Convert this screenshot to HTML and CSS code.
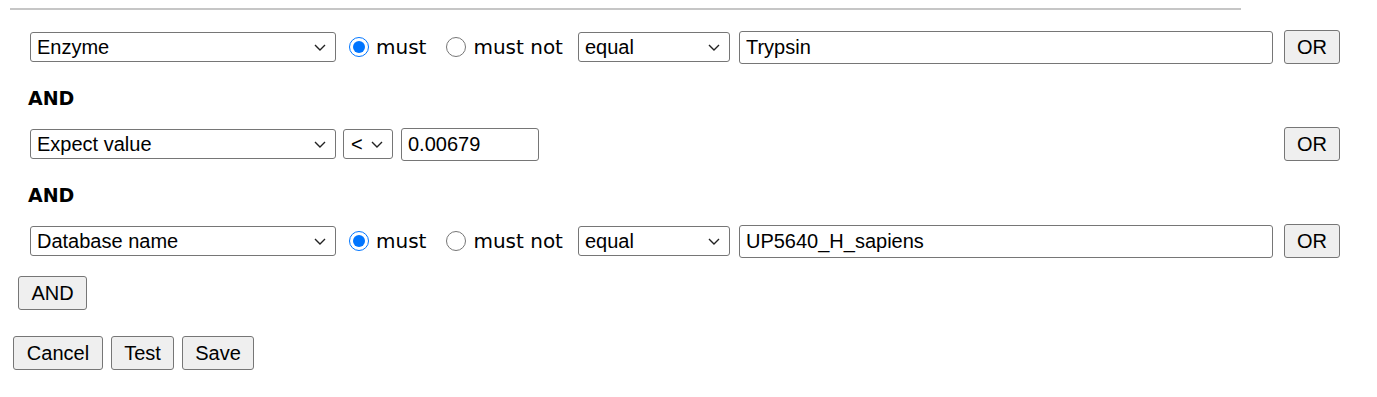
FILE: index.html
```html
<!DOCTYPE html>
<html lang="en">
<head>
    <meta charset="UTF-8">
    <meta name="viewport" content="width=device-width, initial-scale=1.0">
    <title>Filter Rules</title>
    <link rel="stylesheet" href="styles.css">
</head>
<body>
    <hr class="top-rule">

    <form id="filterForm">
        <div class="rules">
            <div class="cond">
                <select class="field">
                    <option>Enzyme</option>
                </select>
                <label class="choice"><input type="radio" name="r1" checked>must</label>
                <label class="choice"><input type="radio" name="r1">must not</label>
                <select class="op">
                    <option>equal</option>
                </select>
                <input type="text" class="value" value="Trypsin">
                <button type="button" class="btn or-btn">OR</button>
            </div>

            <div class="and-label">AND</div>

            <div class="cond">
                <select class="field">
                    <option>Expect value</option>
                </select>
                <select class="cmp">
                    <option>&lt;</option>
                </select>
                <input type="text" class="num" value="0.00679">
                <button type="button" class="btn or-btn">OR</button>
            </div>

            <div class="and-label">AND</div>

            <div class="cond">
                <select class="field">
                    <option>Database name</option>
                </select>
                <label class="choice"><input type="radio" name="r3" checked>must</label>
                <label class="choice"><input type="radio" name="r3">must not</label>
                <select class="op">
                    <option>equal</option>
                </select>
                <input type="text" class="value" value="UP5640_H_sapiens">
                <button type="button" class="btn or-btn">OR</button>
            </div>
        </div>

        <div class="add-row">
            <button type="button" class="btn">AND</button>
        </div>

        <div class="actions">
            <button type="button" class="btn">Cancel</button>
            <button type="button" class="btn">Test</button>
            <button type="button" class="btn">Save</button>
        </div>
    </form>
</body>
</html>
```

FILE: styles.css
```css
body {
    margin: 0;
    padding: 0;
    background-color: #ffffff;
    color: #000;
    font-family: "DejaVu Sans", Verdana, sans-serif;
    font-size: 20px;
}
.top-rule {
    margin: 8px 0 0 10px;
    width: 1231px;
    height: 0;
    border: none;
    border-top: 2px solid #c6c6c6;
}
select, input[type="text"], .btn {
    font-family: "Liberation Sans", Arial, sans-serif;
    font-size: 20px;
    color: #000;
    box-sizing: border-box;
}
.rules {
    margin-top: 20px;
}
.cond {
    display: flex;
    align-items: center;
    height: 34px;
    padding-left: 30px;
}
.and-label {
    height: 63px;
    line-height: 68px;
    padding-left: 28px;
    font-weight: bold;
    font-size: 19px;
}
select {
    -webkit-appearance: none;
    appearance: none;
    height: 30px;
    padding: 0 24px 0 6px;
    border: 1px solid #767676;
    border-radius: 3px;
    background-color: #fff;
    background-image: url("data:image/svg+xml,%3Csvg xmlns='http://www.w3.org/2000/svg' width='12' height='7' viewBox='0 0 12 7'%3E%3Cpath d='M1 1l5 5 5-5' fill='none' stroke='%23222' stroke-width='1.4'/%3E%3C/svg%3E");
    background-repeat: no-repeat;
    background-position: right 9px center;
}
.field {
    width: 306px;
}
.op {
    width: 152px;
    margin-left: 15px;
}
.cmp {
    width: 50px;
    margin-left: 7px;
    padding-left: 7px;
}
.choice {
    display: flex;
    align-items: center;
    margin-left: 13px;
    white-space: nowrap;
}
.choice + .choice {
    margin-left: 20px;
}
.choice input {
    width: 20px;
    height: 20px;
    margin: 0 7px 0 0;
    accent-color: #0075ff;
}
input[type="text"] {
    height: 33px;
    padding: 0 6px;
    border: 1px solid #767676;
    border-radius: 3px;
}
.value {
    width: 534px;
    margin-left: 9px;
}
.num {
    width: 138px;
    margin-left: 8px;
}
.btn {
    height: 34px;
    padding: 0 11px;
    background-color: #efefef;
    border: 1px solid #767676;
    border-radius: 3px;
}
.or-btn {
    margin-left: auto;
    margin-right: 37px;
    width: 56px;
    padding: 0;
}
.add-row {
    margin-top: 18px;
    padding-left: 18px;
}
.add-row .btn {
    width: 69px;
    padding: 0;
}
.actions {
    display: flex;
    gap: 8px;
    margin-top: 26px;
    padding-left: 13px;
}
.actions .btn:nth-child(1) {
    width: 90px;
}
.actions .btn:nth-child(2) {
    width: 63px;
}
.actions .btn:nth-child(3) {
    width: 72px;
}
```
